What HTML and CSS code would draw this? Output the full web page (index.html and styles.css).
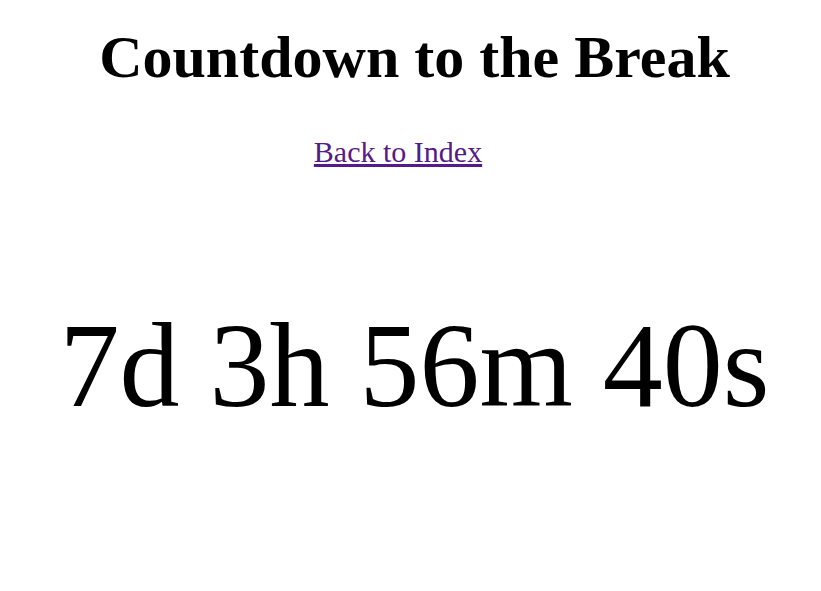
FILE: index.html
```html
<!DOCTYPE html>
<html lang="en">
<head>
<meta charset="utf-8">
<title>Countdown to the Break</title>
<link rel="stylesheet" href="styles.css">
</head>
<body>
<h1 class="title">Countdown to the Break</h1>
<p class="nav"><a href="#">Back to Index</a></p>
<div class="countdown">7d 3h 56m 40s</div>
</body>
</html>
```
FILE: styles.css
```css
body {
  margin: 0;
  padding: 0 0 0 8px;
  font-family: "Liberation Serif", "Times New Roman", serif;
  font-size: 30px;
  text-align: center;
  color: #000;
  background: #fff;
}
.title {
  font-size: 2em;
  font-weight: bold;
  margin: 23px 0 0;
}
.nav {
  margin: 43px 0 0;
  padding-right: 33px;
}
.nav a {
  color: #551a8b;
}
.countdown {
  font-size: 4em;
  margin-top: 128px;
}
```
